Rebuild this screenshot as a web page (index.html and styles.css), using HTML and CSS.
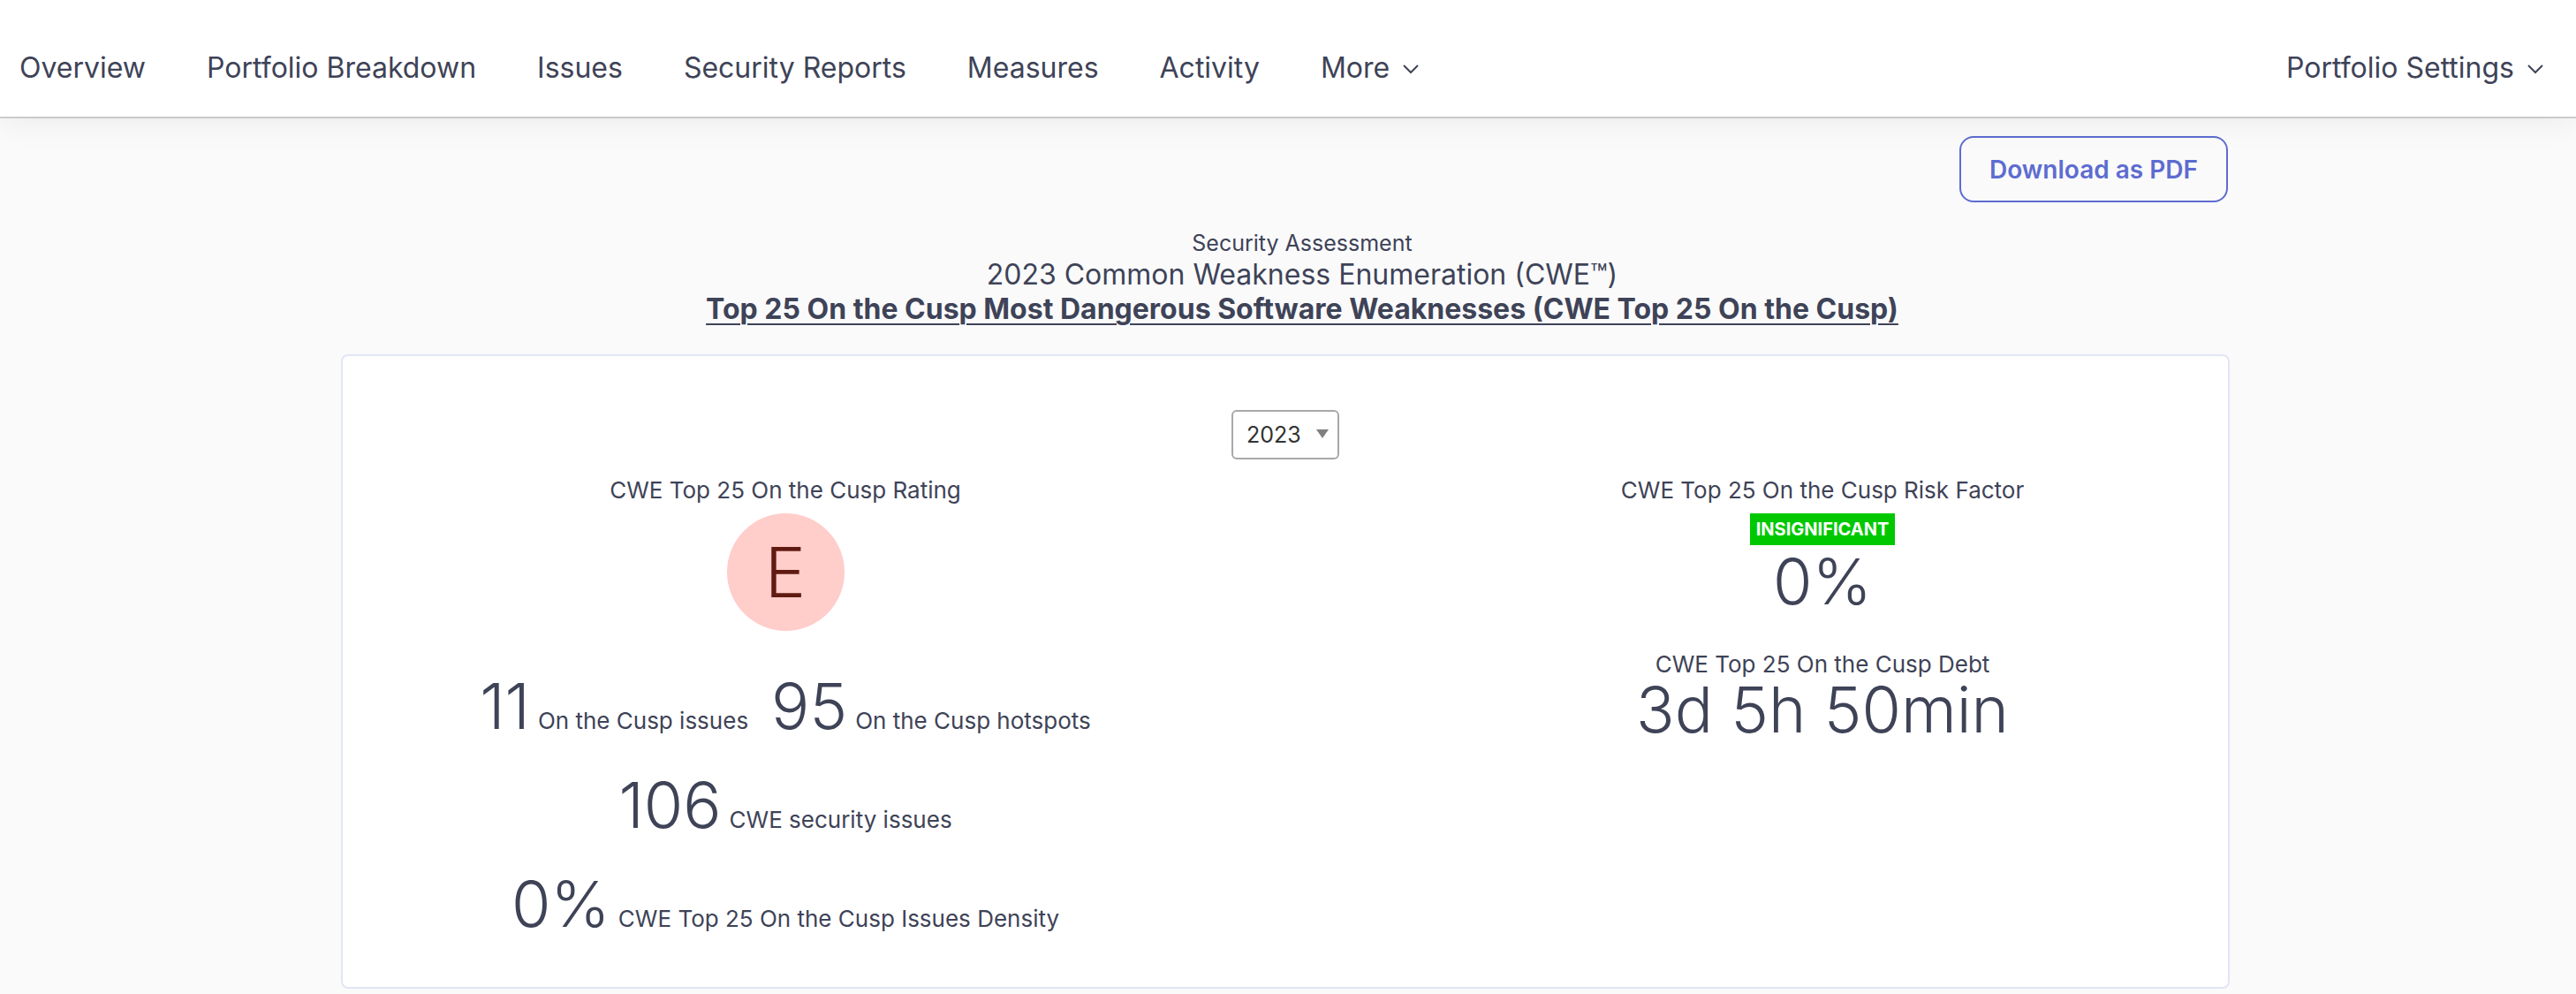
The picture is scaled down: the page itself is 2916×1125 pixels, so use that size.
FILE: index.html
```html
<!DOCTYPE html>
<html lang="en">
<head>
<meta charset="utf-8">
<title>CWE Top 25 On the Cusp</title>
<link rel="stylesheet" href="styles.css">
</head>
<body>
<nav class="topnav">
  <ul class="nav-left">
    <li class="nav-item">Overview</li>
    <li class="nav-item">Portfolio Breakdown</li>
    <li class="nav-item">Issues</li>
    <li class="nav-item">Security Reports</li>
    <li class="nav-item">Measures</li>
    <li class="nav-item">Activity</li>
    <li class="nav-item has-caret">More
      <svg class="caret" viewBox="0 0 20 12" aria-hidden="true"><polyline points="2,2 10,10 18,2" /></svg>
    </li>
  </ul>
  <div class="nav-item has-caret nav-right">Portfolio Settings
    <svg class="caret" viewBox="0 0 20 12" aria-hidden="true"><polyline points="2,2 10,10 18,2" /></svg>
  </div>
</nav>

<main class="page">
  <div class="actions">
    <button class="btn-outline" type="button">Download as PDF</button>
  </div>

  <header class="report-title">
    <div class="t1">Security Assessment</div>
    <div class="t2">2023 Common Weakness Enumeration (CWE™)</div>
    <a class="t3" href="#">Top 25 On the Cusp Most Dangerous Software Weaknesses (CWE Top 25 On the Cusp)</a>
  </header>

  <section class="card">
    <div class="select-row">
      <div class="select">2023<span class="tri"></span></div>
    </div>
    <div class="cols">
      <div class="col">
        <div class="label">CWE Top 25 On the Cusp Rating</div>
        <div class="rating">E</div>
        <div class="stat-row first">
          <span class="num">11</span><span class="lab">On the Cusp issues</span>
          <span class="num second">95</span><span class="lab">On the Cusp hotspots</span>
        </div>
        <div class="stat-row">
          <span class="num">106</span><span class="lab">CWE security issues</span>
        </div>
        <div class="stat-row">
          <span class="num">0%</span><span class="lab">CWE Top 25 On the Cusp Issues Density</span>
        </div>
      </div>
      <div class="col">
        <div class="label">CWE Top 25 On the Cusp Risk Factor</div>
        <div class="badge">INSIGNIFICANT</div>
        <div class="big risk">0%</div>
        <div class="label debt-label">CWE Top 25 On the Cusp Debt</div>
        <div class="big debt">3d 5h 50min</div>
      </div>
    </div>
  </section>
</main>
</body>
</html>
```

FILE: styles.css
```css
* { box-sizing: border-box; }

html, body {
  margin: 0;
  padding: 0;
}

body {
  font-family: Inter, "Noto Sans", "Liberation Sans", sans-serif;
  color: #3e4357;
  background: #fafafb;
  width: 2916px;
  height: 1125px;
  overflow: hidden;
}

/* ---------- top navigation ---------- */
.topnav {
  height: 132px;
  background: #ffffff;
  display: flex;
  align-items: flex-start;
  justify-content: space-between;
  padding: 53px 36px 0 22px;
  box-shadow: 0 2px 0 rgba(0, 0, 0, 0.16), 0 4px 36px rgba(0, 0, 0, 0.07);
  position: relative;
  z-index: 2;
}

.nav-left {
  list-style: none;
  margin: 0;
  padding: 0;
  display: flex;
  gap: 69px;
}

.nav-item {
  font-size: 32px;
  line-height: 48px;
  color: #3e4357;
  white-space: nowrap;
  display: flex;
  align-items: center;
}

.caret {
  width: 20px;
  height: 12px;
  margin-left: 14px;
  margin-top: 2px;
  fill: none;
  stroke: #3e4357;
  stroke-width: 2;
}

/* ---------- page ---------- */
.page {
  width: 2138px;
  margin-left: 386px;
}

.actions {
  display: flex;
  justify-content: flex-end;
  padding-top: 22px;
  padding-right: 2px;
}

.btn-outline {
  width: 304px;
  height: 75px;
  border: 2px solid #5d6cd0;
  border-radius: 16px;
  background: transparent;
  color: #5d6cd0;
  font-family: Inter, "Noto Sans", sans-serif;
  font-weight: 600;
  font-size: 28px;
  padding: 0;
}

.report-title {
  text-align: center;
  padding-left: 38px;
  padding-top: 29px;
  display: flex;
  flex-direction: column;
  align-items: center;
}

.t1 {
  font-size: 25px;
  line-height: 34px;
}

.t2 {
  font-size: 32px;
  line-height: 38px;
}

.t3 {
  font-size: 32px;
  line-height: 40px;
  font-weight: 700;
  color: #3e4357;
  text-decoration: underline;
  text-decoration-thickness: 2px;
  text-underline-offset: 5px;
}

/* ---------- card ---------- */
.card {
  margin-top: 31px;
  background: #ffffff;
  border: 2px solid #e1e6f3;
  border-radius: 8px;
  padding: 61px 0 58px;
}

.select-row {
  display: flex;
  justify-content: center;
}

.select {
  width: 122px;
  height: 56px;
  border: 2px solid #a8a8a8;
  border-radius: 6px;
  display: flex;
  align-items: center;
  padding-left: 15px;
  font-size: 25px;
  color: #333333;
}

.tri {
  width: 0;
  height: 0;
  margin-left: 17px;
  margin-top: -2px;
  border-left: 7px solid transparent;
  border-right: 7px solid transparent;
  border-top: 10px solid #808080;
}

.cols {
  display: grid;
  grid-template-columns: 800px 800px;
  column-gap: 374px;
  padding-left: 101px;
  margin-top: 20px;
}

.col {
  display: flex;
  flex-direction: column;
  align-items: center;
}

.label {
  font-size: 26px;
  line-height: 30px;
  white-space: nowrap;
}

.rating {
  width: 133px;
  height: 133px;
  border-radius: 50%;
  background: #ffcdca;
  color: #5f1b12;
  font-size: 78px;
  font-weight: 300;
  line-height: 133px;
  text-align: center;
  margin-top: 11px;
}

.stat-row {
  display: flex;
  align-items: baseline;
  margin-top: 40px;
  white-space: nowrap;
}

.stat-row.first {
  margin-top: 49px;
}

.num {
  font-size: 72px;
  line-height: 72px;
  font-weight: 300;
}

.num.second {
  margin-left: 26px;
}

.lab {
  font-size: 26px;
  margin-left: 9px;
}

.badge {
  margin-top: 11px;
  height: 36px;
  padding: 0 7px;
  background: #00c800;
  color: #ffffff;
  font-size: 20px;
  font-weight: 700;
  line-height: 36px;
}

.big {
  font-size: 72px;
  line-height: 62px;
  font-weight: 300;
  white-space: nowrap;
}

.big.risk {
  margin-top: 10px;
}

.debt-label {
  margin-top: 48px;
}

.big.debt {
  margin-top: 5px;
}
```
